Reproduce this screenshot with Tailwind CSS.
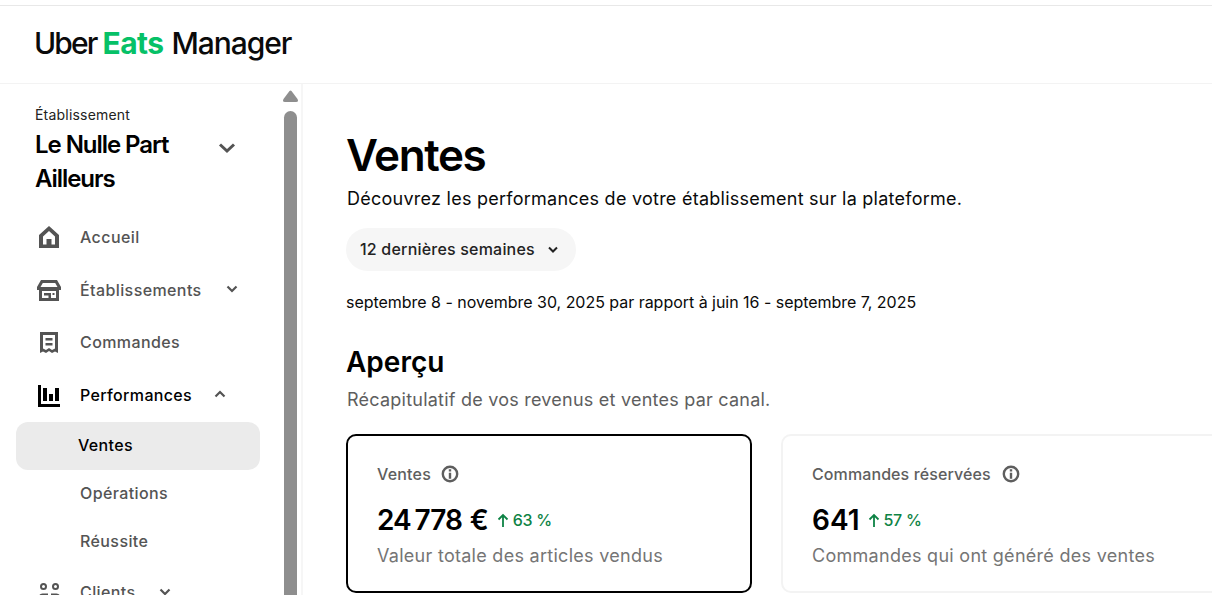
<!DOCTYPE html>
<html lang="fr">
<head>
  <meta charset="UTF-8" />
  <title>Ventes — Uber Eats Manager</title>
  <script src="https://cdn.jsdelivr.net/npm/@tailwindcss/browser@4"></script>
</head>
<body class="h-[595px] overflow-hidden bg-white font-['Inter',sans-serif] text-black">

  <!-- Header -->
  <header class="mt-[5px] h-[79px] border-t border-b border-[#e8e8e8] border-b-[#f3f3f3] pl-[34px] pb-[3px] flex items-center">
    <div class="text-[30px] font-medium leading-none flex text-[#0a0a0a]">
      <span class="tracking-[-1.85px]">Uber</span>
      <span class="ml-[6px] text-[#06c167] font-bold tracking-[-0.6px]">Eats</span>
      <span class="ml-[8px] tracking-[-1.05px]">Manager</span>
    </div>
  </header>

  <div class="flex h-[511px]">
    <!-- Sidebar -->
    <aside class="w-[303px] shrink-0 flex border-r-2 border-[#f6f6f6]">
      <div class="w-[284px] shrink-0 pt-[22px]">
        <div class="pl-[35px]">
          <p class="text-[14px] leading-[18px] text-[#222] tracking-[0.2px]">Établissement</p>
          <div class="flex items-start mt-[4px]">
            <h2 class="w-[183px] text-[24px] leading-[34px] font-semibold tracking-[-1.05px]">Le Nulle Part Ailleurs</h2>
            <svg class="w-[18px] h-[12px] mt-[14px]" viewBox="0 0 18 12" fill="none" stroke="#545454" stroke-width="3"><path d="M2 2.500l7 6.500 7-6.500"/></svg>
          </div>
        </div>

        <nav class="mt-[15px]">
          <a class="h-[52.5px] pl-[36px] flex items-center text-[16px] font-medium text-[#545454] tracking-[0.4px]">
            <svg class="w-[26px] h-[26px]" viewBox="0 0 26 26" fill="#545454"><path fill-rule="evenodd" d="M13 2L23 11V24H3V11ZM13 7L7 12.500V20.500H10.500V15H15.500V20.500H19V12.500Z"/></svg>
            <span class="ml-[18px]">Accueil</span>
          </a>
          <a class="h-[52.5px] pl-[36px] flex items-center text-[16px] font-medium text-[#545454] tracking-[0.4px]">
            <svg class="w-[26px] h-[26px]" viewBox="0 0 26 26" fill="#545454"><path fill-rule="evenodd" d="M5 3H21L25 10V13H23V24H3V13H1V10ZM6.800 6L4.500 10H21.500L19.200 6ZM6 14V21H20V14Z"/><path d="M8 16H15V21H12.500V18.500H8ZM16.500 16H18.500V18H16.500Z"/></svg>
            <span class="ml-[18px] w-[146px]">Établissements</span>
            <svg class="w-[12px] h-[8px] -mt-[1px]" viewBox="0 0 12 8" fill="none" stroke="#545454" stroke-width="2.200"><path d="M1.500 1.500L6 6l4.500-4.500"/></svg>
          </a>
          <a class="h-[52.5px] pl-[36px] flex items-center text-[16px] font-medium text-[#545454] tracking-[0.4px]">
            <svg class="w-[26px] h-[26px]" viewBox="0 0 26 26" fill="#545454"><path fill-rule="evenodd" d="M4 3H22V24L19 22.500 16 24 13 22 10 24 7 22.500 4 24ZM7 6V19.500L10 21 13 19 16 21 19 19.500V6Z"/><path d="M9.500 9H16.500V11.500H9.500ZM9.500 14H16.500V16.500H9.500Z"/></svg>
            <span class="ml-[18px]">Commandes</span>
          </a>
          <a class="h-[52.5px] pl-[36px] flex items-center text-[16px] font-medium text-black tracking-[0.35px]">
            <svg class="w-[26px] h-[26px]" viewBox="0 0 26 26" fill="#000"><path d="M2 3H5V22H24V25H2ZM7 6H11V19H7ZM13 12H17V19H13ZM19 6H23V19H19Z"/></svg>
            <span class="ml-[18px] w-[134px]">Performances</span>
            <svg class="w-[12px] h-[8px] -mt-[1px]" viewBox="0 0 12 8" fill="none" stroke="#545454" stroke-width="2.200"><path d="M1.500 6.500L6 2l4.500 4.500"/></svg>
          </a>
          <a class="mt-[1px] -mb-[1px] pb-[2px] ml-[16px] w-[244px] h-[48px] rounded-[12px] bg-[#ebebeb] pl-[62px] flex items-center text-[16px] font-medium text-black tracking-[0.35px]">Ventes</a>
          <a class="h-[48px] pl-[80px] flex items-center text-[16px] font-medium text-[#545454] tracking-[0.4px]">Opérations</a>
          <a class="h-[48px] pl-[80px] flex items-center text-[16px] font-medium text-[#545454] tracking-[0.4px]">Réussite</a>
          <a class="h-[54px] pl-[36px] flex items-center text-[16px] font-medium text-[#545454] tracking-[0.4px]">
            <svg class="w-[26px] h-[26px]" viewBox="0 0 26 26" fill="#545454"><path fill-rule="evenodd" d="M7.500 4a3.500 3.500 0 110 7 3.500 3.500 0 010-7zm0 2a1.500 1.500 0 100 3 1.500 1.500 0 000-3zM19.500 4a3.500 3.500 0 110 7 3.500 3.500 0 010-7zm0 2a1.500 1.500 0 100 3 1.500 1.500 0 000-3z"/><path d="M3 24V18a3.500 3.500 0 013.500-3.500H12V17H6.500a1 1 0 00-1 1V24ZM24 24V18a3.500 3.500 0 00-3.500-3.500H15V17H20.500a1 1 0 011 1V24Z"/></svg>
            <span class="ml-[18px] w-[79px]">Clients</span>
            <svg class="w-[12px] h-[8px] -mt-[1px]" viewBox="0 0 12 8" fill="none" stroke="#545454" stroke-width="2.200"><path d="M1.500 1.500L6 6l4.500-4.500"/></svg>
          </a>
        </nav>
      </div>

      <!-- Scrollbar -->
      <div class="w-[13px] shrink-0 flex flex-col">
        <svg class="w-[15px] h-[12px] mt-[6px] -ml-[1px] shrink-0" viewBox="0 0 15 12" fill="#8e8e8e"><path d="M6.500 1Q7.500 0 8.500 1L14.500 9Q16 12 13 12H2Q-1 12 .5 9Z"/></svg>
        <div class="mt-[9px] flex-1 bg-[#8e8e8e] rounded-t-[7px]"></div>
      </div>
    </aside>

    <!-- Main -->
    <main class="flex-1 min-w-0 pl-[43px] pt-[43px] overflow-hidden">
      <h1 class="text-[44px] leading-[56px] font-semibold tracking-[-1.4px]">Ventes</h1>
      <p class="mt-[4px] ml-[1px] text-[18px] leading-[24px] text-[#0a0a0a] tracking-[0.25px]">Découvrez les performances de votre établissement sur la plateforme.</p>
      <button class="mt-[17px] w-[230px] h-[43px] rounded-full bg-[#f6f6f6] pl-[14px] pb-[2px] flex items-center text-[16px] font-medium text-[#222] tracking-[0.2px]">
        <span>12 dernières semaines</span>
        <svg class="w-[10px] h-[7px] ml-[13px] mt-[2px]" viewBox="0 0 10 7" fill="none" stroke="#222" stroke-width="2"><path d="M1 1.500l4 4 4-4"/></svg>
      </button>
      <p class="mt-[21px] text-[16px] leading-[20px] tracking-[-0.03px] text-[#0a0a0a]">septembre 8 - novembre 30, 2025 par rapport à juin 16 - septembre 7, 2025</p>

      <h2 class="mt-[32px] text-[28px] leading-[36px] font-semibold tracking-[0px]">Aperçu</h2>
      <p class="mt-[8px] ml-[1px] text-[18px] leading-[24px] text-[#5e5e5e] tracking-[0.23px]">Récapitulatif de vos revenus et ventes par canal.</p>

      <div class="mt-[22px] flex gap-[29px] w-[1000px]">
        <div class="w-[406px] h-[159px] shrink-0 rounded-[10px] border-2 border-black pl-[29px] pt-[28px]">
          <div class="flex items-center gap-[10px] text-[16px] leading-[20px] font-medium text-[#5e5e5e] tracking-[0.2px]">
            <span>Ventes</span>
            <svg class="w-[18px] h-[18px]" viewBox="0 0 18 18"><circle cx="9" cy="9" r="7.200" fill="none" stroke="#5e5e5e" stroke-width="2.400"/><path d="M7.800 4.300h2.400v2.200H7.800zM7.800 7.800h2.400v5.900H7.800z" fill="#5e5e5e"/></svg>
          </div>
          <div class="mt-[20px] flex items-center h-[32px]">
            <span class="flex text-[28px] font-semibold tracking-[-1.05px]"><span>24</span><span class="ml-[4px]">778</span><span class="ml-[8px]">€</span></span>
            <svg class="w-[12px] h-[14px] ml-[9px]" viewBox="0 0 12 14" fill="none" stroke="#0e8345" stroke-width="1.800"><path d="M6 14V2M1.500 6.500L6 2l4.500 4.500"/></svg>
            <span class="ml-[4px] text-[16px] font-medium text-[#0e8345] tracking-[-0.3px]">63 %</span>
          </div>
          <p class="mt-[8px] text-[18px] leading-[24px] text-[#757575] tracking-[0.28px]">Valeur totale des articles vendus</p>
        </div>
        <div class="w-[560px] h-[159px] shrink-0 rounded-[10px] border-2 border-[#f3f3f3] pl-[29px] pt-[28px]">
          <div class="flex items-center gap-[11px] text-[16px] leading-[20px] font-medium text-[#5e5e5e] tracking-[0.1px]">
            <span>Commandes réservées</span>
            <svg class="w-[18px] h-[18px]" viewBox="0 0 18 18"><circle cx="9" cy="9" r="7.200" fill="none" stroke="#5e5e5e" stroke-width="2.400"/><path d="M7.800 4.300h2.400v2.200H7.800zM7.800 7.800h2.400v5.900H7.800z" fill="#5e5e5e"/></svg>
          </div>
          <div class="mt-[20px] flex items-center h-[32px]">
            <span class="text-[28px] font-semibold tracking-[0px]">641</span>
            <svg class="w-[12px] h-[14px] ml-[8px]" viewBox="0 0 12 14" fill="none" stroke="#0e8345" stroke-width="1.800"><path d="M6 14V2M1.500 6.500L6 2l4.500 4.500"/></svg>
            <span class="ml-[4px] text-[16px] font-medium text-[#0e8345] tracking-[-0.3px]">57 %</span>
          </div>
          <p class="mt-[8px] text-[18px] leading-[24px] text-[#757575] tracking-[0.28px]">Commandes qui ont généré des ventes</p>
        </div>
      </div>
    </main>
  </div>
</body>
</html>
